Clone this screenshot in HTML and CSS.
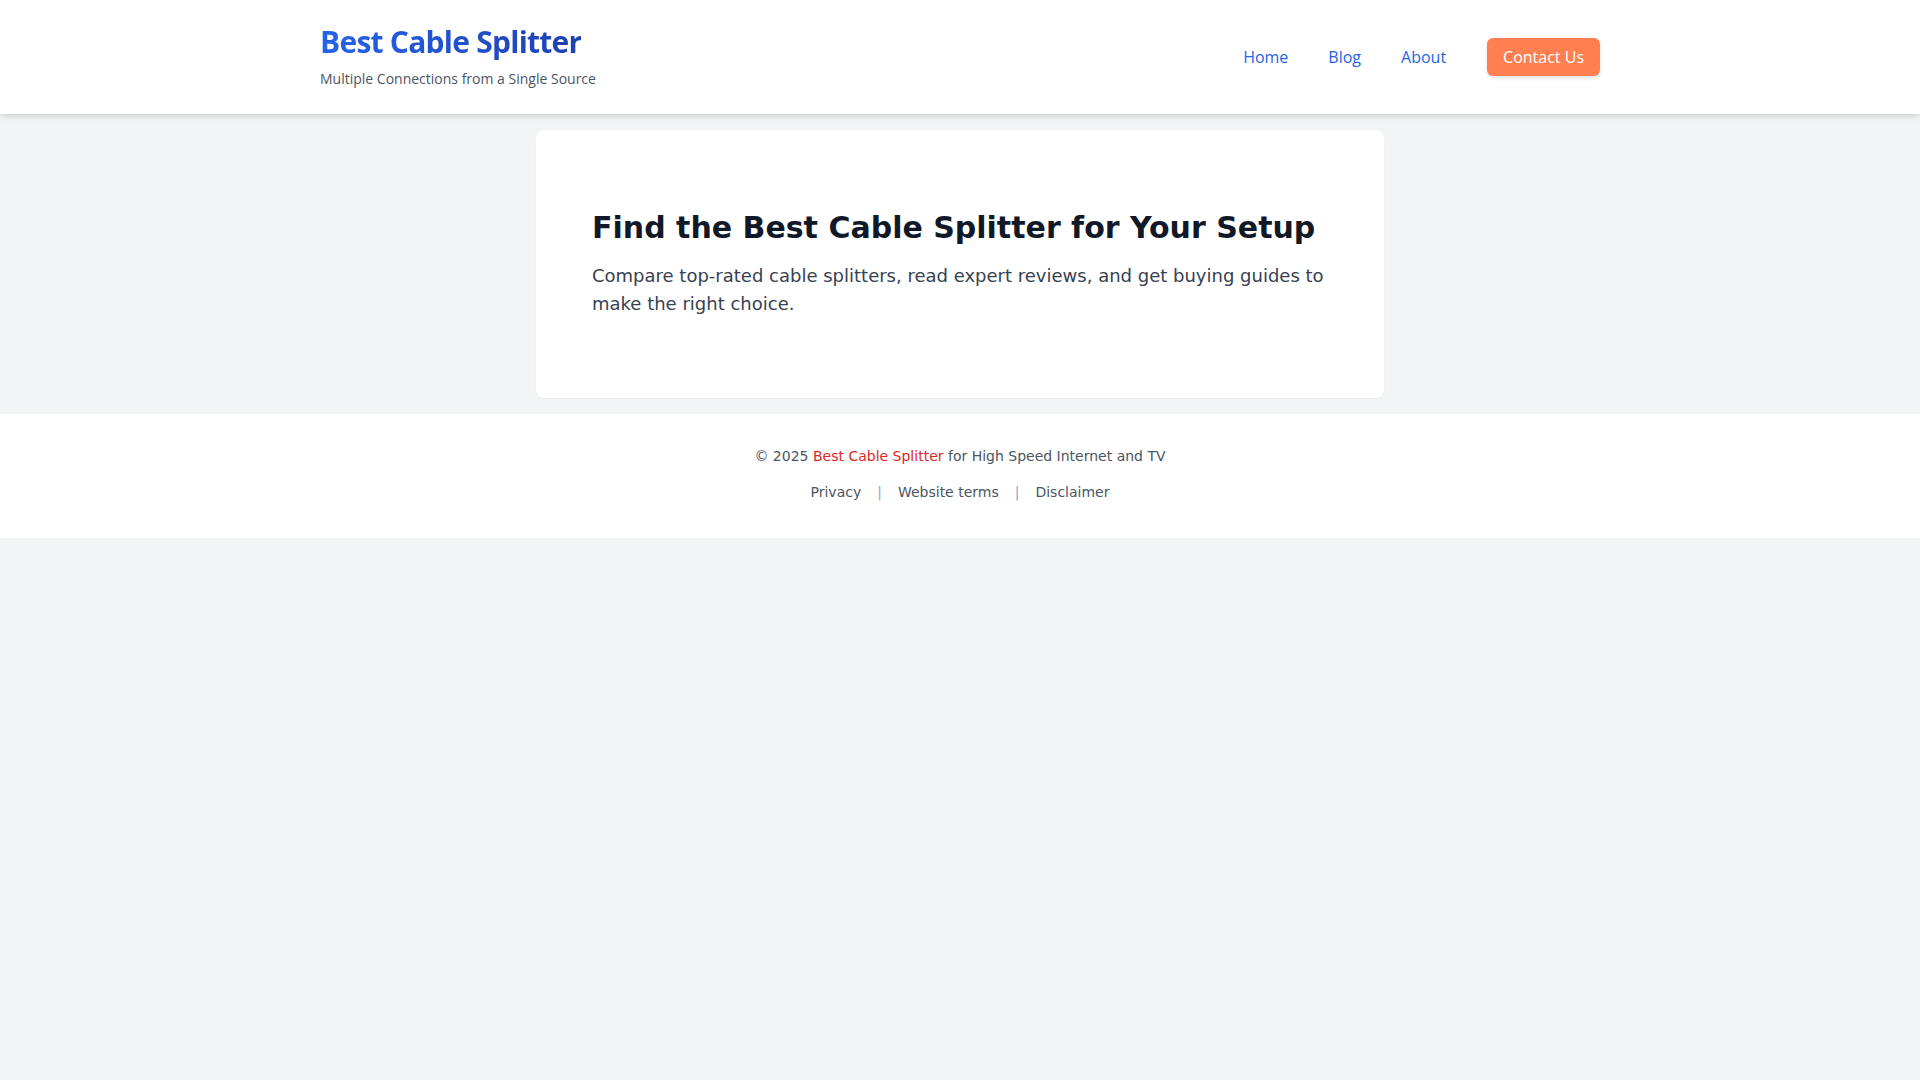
FILE: index.html
```html
<!DOCTYPE html>
<html lang="en">
<head>
<meta charset="utf-8">
<title>Best Cable Splitter</title>
<link rel="stylesheet" href="styles.css">
</head>
<body>
<header class="site-header">
  <div class="header-inner">
    <div class="brand">
      <a class="brand-title" href="#">Best Cable Splitter</a>
      <p class="brand-tagline">Multiple Connections from a Single Source</p>
    </div>
    <nav class="nav">
      <a class="nav-link" href="#">Home</a>
      <a class="nav-link" href="#">Blog</a>
      <a class="nav-link" href="#">About</a>
      <a class="nav-button" href="#">Contact Us</a>
    </nav>
  </div>
</header>
<main class="main">
  <section class="hero-card">
    <h1 class="hero-title">Find the Best Cable Splitter for Your Setup</h1>
    <p class="hero-text">Compare top-rated cable splitters, read expert reviews, and get buying guides to make the right choice.</p>
  </section>
</main>
<footer class="site-footer">
  <p class="copyright">© 2025 <a class="footer-brand" href="#">Best Cable Splitter</a> for High Speed Internet and TV</p>
  <div class="footer-links">
    <a class="footer-link" href="#">Privacy</a>
    <span class="sep">|</span>
    <a class="footer-link" href="#">Website terms</a>
    <span class="sep">|</span>
    <a class="footer-link" href="#">Disclaimer</a>
  </div>
</footer>
</body>
</html>
```

FILE: styles.css
```css
* { box-sizing: border-box; }
html, body { margin: 0; padding: 0; }
body {
  background: #f3f4f6;
  font-family: "DejaVu Sans", sans-serif;
  min-height: 100vh;
}
a { text-decoration: none; }

.site-header {
  background: #ffffff;
  box-shadow: 0 4px 6px -1px rgba(0,0,0,0.1), 0 2px 4px -2px rgba(0,0,0,0.1);
  position: relative;
  z-index: 1;
}
.header-inner {
  max-width: 1280px;
  margin: 0 auto;
  padding: 24px 0 25px;
  display: flex;
  align-items: center;
  justify-content: space-between;
  font-family: "Open Sans", sans-serif;
}
.brand { display: flex; flex-direction: column; }
.brand-title {
  font-size: 30px;
  line-height: 36px;
  font-weight: 700;
  letter-spacing: -0.75px;
  background: linear-gradient(to right, #2563eb, #1e40af);
  -webkit-background-clip: text;
  background-clip: text;
  color: transparent;
  align-self: flex-start;
}
.brand-tagline {
  margin: 9px 0 0;
  font-size: 14px;
  line-height: 20px;
  color: #4b5563;
}
.nav { display: flex; align-items: center; gap: 40px; padding-top: 1px; }
.nav-link {
  font-size: 16px;
  line-height: 24px;
  color: #2563eb;
}
.nav-button {
  margin-left: 1px;
  background: #ff7f50;
  color: #ffffff;
  font-size: 16px;
  line-height: 24px;
  padding: 7px 16px;
  border-radius: 6px;
  box-shadow: 0 2px 4px rgba(0,0,0,0.12);
}

.main { padding: 16px 0; }
.hero-card {
  width: 848px;
  margin: 0 auto;
  background: #ffffff;
  border-radius: 8px;
  padding: 80px 56px;
  box-shadow: 0 1px 2px rgba(0,0,0,0.04);
}
.hero-title {
  margin: 0 0 16px;
  font-size: 30px;
  line-height: 36px;
  font-weight: 700;
  color: #111827;
}
.hero-text {
  margin: 0;
  font-size: 18px;
  line-height: 28px;
  color: #374151;
}

.site-footer {
  background: #ffffff;
  padding: 32px 0 34px;
  text-align: center;
}
.copyright {
  margin: 0;
  font-size: 14px;
  line-height: 20px;
  color: #4b5563;
}
.footer-brand { color: #dc2626; }
.footer-links {
  margin-top: 14px;
  display: flex;
  justify-content: center;
  align-items: center;
  gap: 16px;
  font-size: 14px;
  line-height: 24px;
}
.footer-link { color: #4b5563; }
.sep { color: #9ca3af; }
```
